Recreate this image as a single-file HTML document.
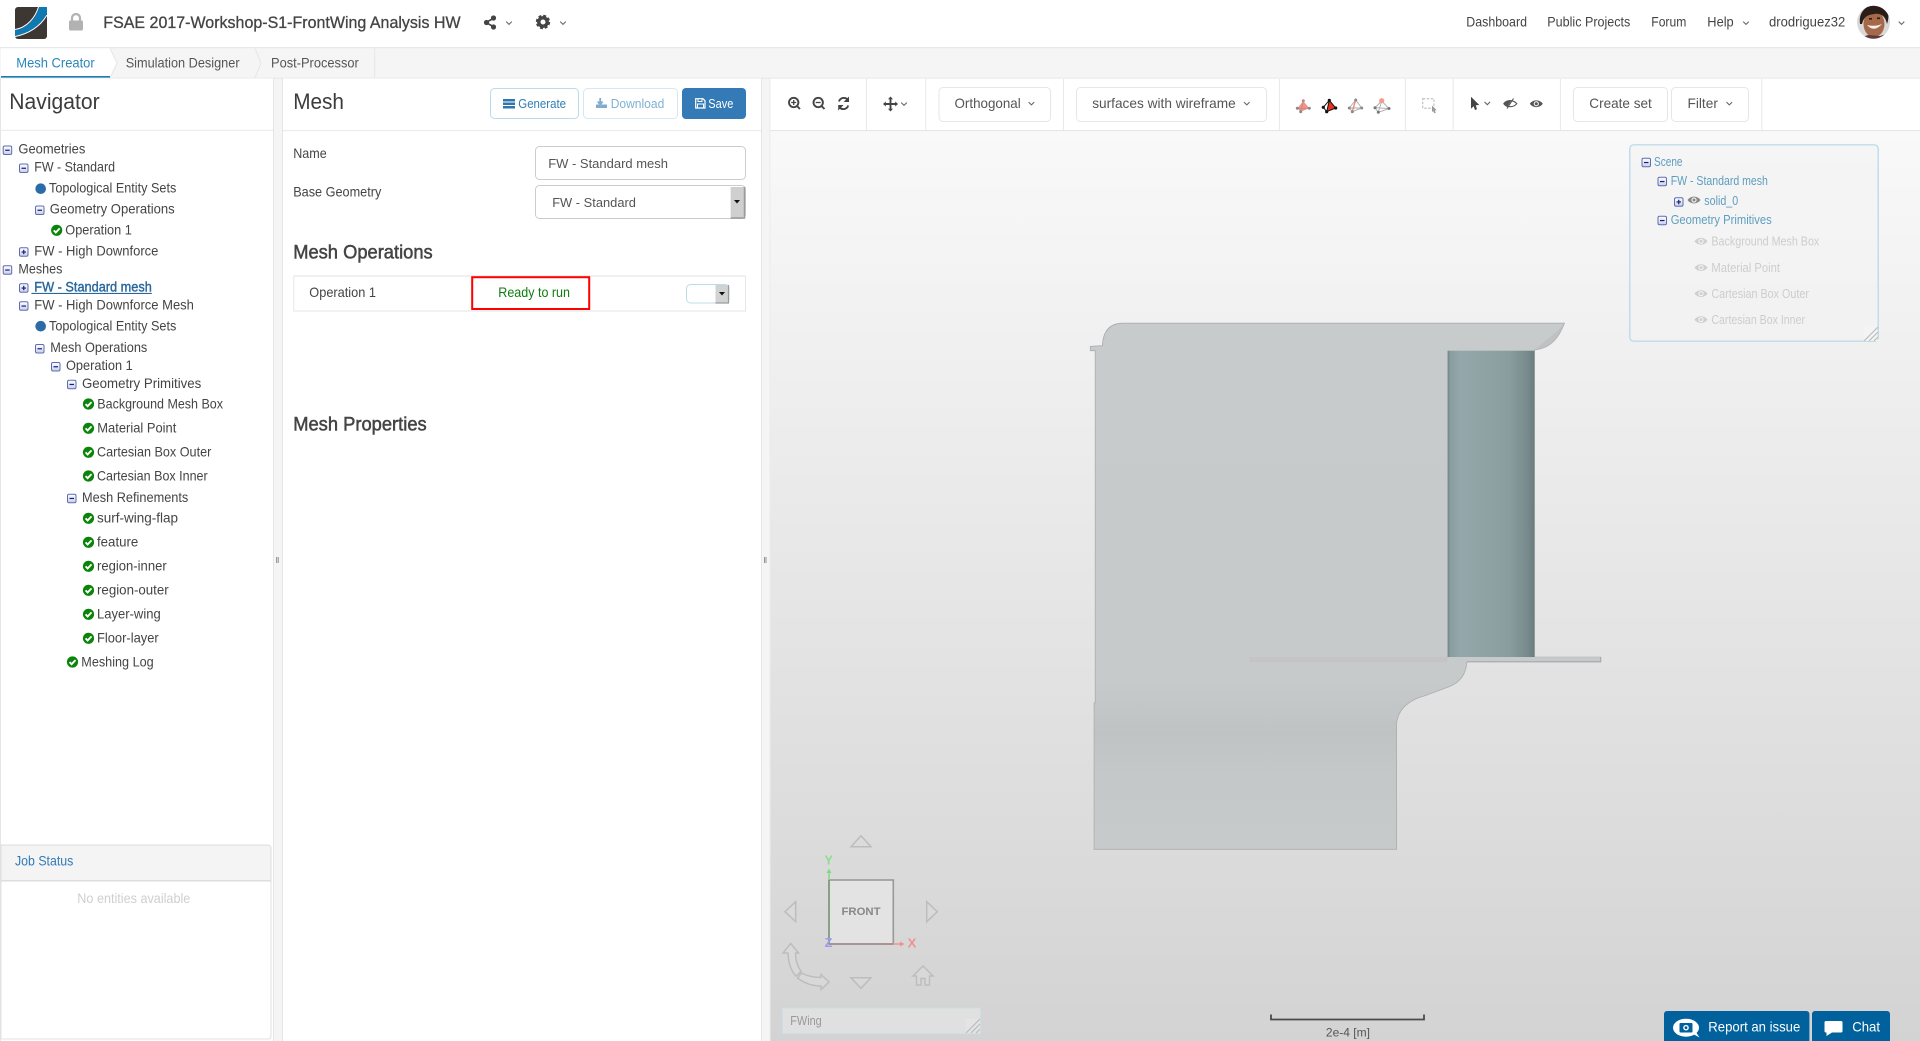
<!DOCTYPE html>
<html lang="en"><head><meta charset="utf-8"><title>Mesh Creator</title>
<style>
html,body{margin:0;padding:0;background:#fff;overflow:hidden}
svg{display:block}
text{font-family:"Liberation Sans",sans-serif;font-size:14px;fill:#444;white-space:pre}
.h{font-size:22px;fill:#3c3c3c}
.h2{font-size:19.5px;fill:#444;stroke:#444;stroke-width:.5}
.t13{font-size:13px}
.blue{fill:#337ab7}
.lb{fill:#5d9ebf;font-size:12.5px}
.gr{fill:#cdcdcd;font-size:12.5px}
.ch{fill:none;stroke:#666;stroke-width:1.1}
.ic{fill:none;stroke:#444;stroke-width:1.9}
.ar{fill:#dcdcdc;fill-opacity:.5;stroke:#bdbdbd;stroke-width:1.5}
</style></head><body>
<svg width="1920" height="1041" viewBox="0 0 1920 1041" xmlns="http://www.w3.org/2000/svg">
<defs>
<linearGradient id="bg" x1="0" y1="0" x2="0" y2="1"><stop offset="0" stop-color="#f9f9f9"/><stop offset="1" stop-color="#d3d3d3"/></linearGradient>
<linearGradient id="boxg" x1="0" y1="0" x2="0" y2="1"><stop offset="0" stop-color="#fff"/><stop offset="1" stop-color="#c9d0e4"/></linearGradient>
<linearGradient id="cyl" x1="0" y1="0" x2="1" y2="0"><stop offset="0" stop-color="#6f8285"/><stop offset=".03" stop-color="#8a9ea1"/><stop offset=".15" stop-color="#94a7aa"/><stop offset=".7" stop-color="#8a9d9f"/><stop offset=".92" stop-color="#778a8c"/><stop offset="1" stop-color="#6b7c7e"/></linearGradient>
<linearGradient id="wing" x1="0" y1="0" x2="0" y2="1"><stop offset="0" stop-color="#c7cbcb"/><stop offset=".68" stop-color="#c6caca"/><stop offset=".78" stop-color="#c0c3c4"/><stop offset=".86" stop-color="#c5c8c9"/><stop offset="1" stop-color="#c6caca"/></linearGradient>
<g id="mi"><rect x="-4" y="-4" width="8.5" height="8.5" rx="1.5" fill="url(#boxg)" stroke="#5c6cb4" stroke-width="1"/><path d="M-2 .25H2.5" stroke="#1a1a80" stroke-width="1.2"/></g>
<g id="pl"><rect x="-4" y="-4" width="8.5" height="8.5" rx="1.5" fill="url(#boxg)" stroke="#5c6cb4" stroke-width="1"/><path d="M-2 .25H2.5M.25 -2V2.5" stroke="#1a1a80" stroke-width="1.2"/></g>
<g id="ck"><circle r="5.6" fill="#0b840b"/><path d="M-2.9 .1L-.9 2.2L3 -1.9" fill="none" stroke="#fff" stroke-width="1.9"/></g>
<path id="cv" d="M-2.8 -1.4L0 1.4L2.8 -1.4" class="ch"/>
<g id="eye"><path d="M-6.5 0C-3.5 -4.5 3.5 -4.5 6.5 0C3.5 4.5 -3.5 4.5 -6.5 0Z" fill="currentColor"/><circle r="2.6" fill="#f4f4f4"/><circle r="1.5" fill="currentColor"/></g>
<path id="hatch" d="M0 14L14 0M5 14L14 5M10 14L14 10" stroke="#bbb" stroke-width="1.2" fill="none"/>
</defs>

<!-- base -->
<rect width="1920" height="1041" fill="#f5f5f5"/>
<rect width="1920" height="47" fill="#fff"/>
<rect y="47" width="1920" height="1.3" fill="#e8e8e8"/>

<!-- logo -->
<rect x="15" y="7" width="32" height="32" rx="3" fill="#3d3733"/>
<path d="M15 30C28 28 36 18 39 7L47 7L47 13C42 25 30 33 15 36Z" fill="#0f79b4"/>
<path d="M15 29.5C27 27.5 35 18 38.5 7" fill="none" stroke="#fff" stroke-width="1"/>
<path d="M15 36.5C28 34 40 27 47 15" fill="none" stroke="#fff" stroke-width="1"/>
<!-- lock -->
<path d="M72 21V18a4 4 0 0 1 8 0V21" fill="none" stroke="#b2b2b2" stroke-width="2.2"/>
<rect x="69" y="20.5" width="14" height="10" rx="1.5" fill="#b2b2b2"/>

<text x="103.3" y="28" textLength="357.3" lengthAdjust="spacingAndGlyphs" style="font-size:17px;fill:#444;stroke:#444;stroke-width:.3">FSAE 2017-Workshop-S1-FrontWing Analysis HW</text>
<!-- share -->
<path d="M494 18L486 22.5L494 27" fill="none" stroke="#444" stroke-width="1.6"/>
<circle cx="493.5" cy="18" r="2.6" fill="#444"/><circle cx="486.5" cy="22.5" r="2.6" fill="#444"/><circle cx="493.5" cy="27" r="2.6" fill="#444"/>
<use href="#cv" x="509" y="23"/>
<!-- gear -->
<circle cx="543" cy="22" r="4.2" fill="none" stroke="#444" stroke-width="3.4"/>
<circle cx="543" cy="22" r="6.2" fill="none" stroke="#444" stroke-width="2" stroke-dasharray="3 1.87"/>
<use href="#cv" x="563" y="23"/>

<text x="1466.3" y="26.7" textLength="60.7" lengthAdjust="spacingAndGlyphs">Dashboard</text>
<text x="1547.3" y="26.7" textLength="83" lengthAdjust="spacingAndGlyphs">Public Projects</text>
<text x="1651.3" y="26.7" textLength="35" lengthAdjust="spacingAndGlyphs">Forum</text>
<text x="1707.3" y="26.7" textLength="26.4" lengthAdjust="spacingAndGlyphs">Help</text>
<use href="#cv" x="1746" y="23"/>
<text x="1769" y="26.7" textLength="76.3" lengthAdjust="spacingAndGlyphs">drodriguez32</text>
<!-- avatar -->
<clipPath id="av"><circle cx="1873.5" cy="22.3" r="16.5"/></clipPath>
<g clip-path="url(#av)"><rect x="1857" y="5" width="33" height="35" fill="#d8d8d8"/>
<ellipse cx="1874" cy="24" rx="10.5" ry="13" fill="#a5694a"/>
<path d="M1860 24C1858 9 1870 4 1878 5C1889 6 1890 15 1887 24C1885 15 1880 13 1874 14C1868 15 1864 16 1862 24Z" fill="#2a1c16"/>
<path d="M1867 25Q1874 33 1882 24Q1875 27 1867 25Z" fill="#f3efe9"/>
<rect x="1869" y="18" width="3" height="1.6" fill="#2a1c16"/><rect x="1877" y="17.5" width="3" height="1.6" fill="#2a1c16"/>
<path d="M1857 39L1868 35L1880 36L1890 33V41H1857Z" fill="#5a3a40"/></g>
<use href="#cv" x="1901.5" y="23"/>

<!-- tabs -->
<rect x="0" y="48.3" width="375" height="29.7" fill="#f5f5f5"/>
<rect x="1" y="48.3" width="109" height="29.7" fill="#fff"/>
<path d="M110 48.3L117 63L110 78" fill="#fff" stroke="#e6e6e6"/>
<path d="M255 48.3L261 63L255 78" fill="#f5f5f5" stroke="#e6e6e6"/>
<path d="M374.7 48.3V78" stroke="#e6e6e6"/>
<rect x="1" y="76" width="109" height="2.2" fill="#1a7cb2"/>
<text x="16.3" y="67.3" textLength="78.4" lengthAdjust="spacingAndGlyphs" style="fill:#2a86ba">Mesh Creator</text>
<text x="125.7" y="67.3" textLength="113.9" lengthAdjust="spacingAndGlyphs" style="fill:#555">Simulation Designer</text>
<text x="271" y="67.3" textLength="87.8" lengthAdjust="spacingAndGlyphs" style="fill:#555">Post-Processor</text>
<rect y="77.6" width="1920" height="1.2" fill="#e8e8e8"/>

<!-- navigator panel -->
<rect x="1" y="78.5" width="272" height="962.5" fill="#fff"/>
<path d="M.5 78V1041M273.5 78V1041" stroke="#e5e5e5"/>
<text class="h" x="9.3" y="109" textLength="90.3" lengthAdjust="spacingAndGlyphs">Navigator</text>
<rect x="1" y="129.7" width="272" height="1.2" fill="#ececec"/>

<use href="#mi" x="7.2" y="150"/><text x="18.4" y="153.7" textLength="66.9" lengthAdjust="spacingAndGlyphs">Geometries</text>
<use href="#mi" x="23.5" y="168"/><text x="34.3" y="171.7" textLength="80.7" lengthAdjust="spacingAndGlyphs">FW - Standard</text>
<circle cx="40.7" cy="188.7" r="5.3" fill="#2b6ca8"/><text x="49" y="192.7" textLength="127.3" lengthAdjust="spacingAndGlyphs">Topological Entity Sets</text>
<use href="#mi" x="39.5" y="210"/><text x="49.8" y="213.7" textLength="124.9" lengthAdjust="spacingAndGlyphs">Geometry Operations</text>
<use href="#ck" x="56.7" y="230.3"/><text x="65.3" y="234.7" textLength="66.5" lengthAdjust="spacingAndGlyphs">Operation 1</text>
<use href="#pl" x="23.5" y="251.8"/><text x="34.3" y="255.7" textLength="124.1" lengthAdjust="spacingAndGlyphs">FW - High Downforce</text>
<use href="#mi" x="7.2" y="269.8"/><text x="18.4" y="273.7" textLength="44" lengthAdjust="spacingAndGlyphs">Meshes</text>
<use href="#pl" x="23.5" y="287.8"/><text x="34.3" y="291.7" textLength="117.5" lengthAdjust="spacingAndGlyphs" style="fill:#27679e;stroke:#27679e;stroke-width:.4">FW - Standard mesh</text>
<rect x="31.4" y="292.9" width="120.4" height="1.1" fill="#27679e"/>
<use href="#mi" x="23.5" y="305.8"/><text x="34.3" y="309.7" textLength="159.6" lengthAdjust="spacingAndGlyphs">FW - High Downforce Mesh</text>
<circle cx="40.7" cy="326.2" r="5.3" fill="#2b6ca8"/><text x="49" y="330.7" textLength="127.3" lengthAdjust="spacingAndGlyphs">Topological Entity Sets</text>
<use href="#mi" x="39.5" y="348.5"/><text x="50.3" y="352.2" textLength="97" lengthAdjust="spacingAndGlyphs">Mesh Operations</text>
<use href="#mi" x="55.5" y="366.5"/><text x="66" y="370.2" textLength="66.7" lengthAdjust="spacingAndGlyphs">Operation 1</text>
<use href="#mi" x="71.5" y="384.2"/><text x="82" y="387.9" textLength="119.3" lengthAdjust="spacingAndGlyphs">Geometry Primitives</text>
<use href="#ck" x="88.5" y="404"/><text x="97.3" y="408.7" textLength="125.7" lengthAdjust="spacingAndGlyphs">Background Mesh Box</text>
<use href="#ck" x="88.5" y="428.3"/><text x="97.3" y="432.7" textLength="79" lengthAdjust="spacingAndGlyphs">Material Point</text>
<use href="#ck" x="88.5" y="452.3"/><text x="97" y="456.7" textLength="114.3" lengthAdjust="spacingAndGlyphs">Cartesian Box Outer</text>
<use href="#ck" x="88.5" y="476"/><text x="97" y="480.7" textLength="110.7" lengthAdjust="spacingAndGlyphs">Cartesian Box Inner</text>
<use href="#mi" x="71.5" y="498.2"/><text x="82" y="501.9" textLength="106.3" lengthAdjust="spacingAndGlyphs">Mesh Refinements</text>
<use href="#ck" x="88.5" y="518.3"/><text x="97" y="522.7" textLength="81" lengthAdjust="spacingAndGlyphs">surf-wing-flap</text>
<use href="#ck" x="88.5" y="542.3"/><text x="97" y="546.7" textLength="41.3" lengthAdjust="spacingAndGlyphs">feature</text>
<use href="#ck" x="88.5" y="566.3"/><text x="97" y="570.7" textLength="69.7" lengthAdjust="spacingAndGlyphs">region-inner</text>
<use href="#ck" x="88.5" y="590.3"/><text x="97" y="594.7" textLength="71.7" lengthAdjust="spacingAndGlyphs">region-outer</text>
<use href="#ck" x="88.5" y="614.3"/><text x="97" y="618.7" textLength="63.7" lengthAdjust="spacingAndGlyphs">Layer-wing</text>
<use href="#ck" x="88.5" y="638.3"/><text x="97" y="642.7" textLength="61.7" lengthAdjust="spacingAndGlyphs">Floor-layer</text>
<use href="#ck" x="72.5" y="662"/><text x="81.3" y="666.7" textLength="72.4" lengthAdjust="spacingAndGlyphs">Meshing Log</text>

<!-- job status -->
<path d="M1 845H268a3 3 0 0 1 3 3V881H1Z" fill="#f4f4f4" stroke="#ddd"/>
<path d="M1 881H271V1036a3 3 0 0 1 -3 3H1Z" fill="#fff" stroke="#e0e0e0"/>
<rect x="1" y="880" width="270" height="1.4" fill="#ddd"/>
<text class="blue" x="15" y="865.7" textLength="58.3" lengthAdjust="spacingAndGlyphs">Job Status</text>
<text x="77.3" y="902.8" textLength="113" lengthAdjust="spacingAndGlyphs" style="fill:#cfcfcf">No entities available</text>
<path d="M276.7 557V563M278.2 557V563" stroke="#777" stroke-width=".8"/>

<!-- mesh panel -->
<rect x="282.5" y="78.5" width="479" height="962.5" fill="#fff"/>
<path d="M282.5 78V1041M761.5 78V1041" stroke="#e5e5e5"/>
<text class="h" x="293.2" y="109" textLength="50.8" lengthAdjust="spacingAndGlyphs">Mesh</text>
<rect x="283" y="130" width="478" height="1.2" fill="#ececec"/>

<rect x="490.5" y="88.5" width="88" height="30" rx="4" fill="#fff" stroke="#b9dbea"/>
<path d="M503 99H515V101.5H503ZM503 102.5H515V105H503ZM503 106H515V108.5H503Z" fill="#2f76ad"/>
<text x="518.3" y="108" textLength="47.7" lengthAdjust="spacingAndGlyphs" class="t13" style="fill:#2f7fb2">Generate</text>
<rect x="583.5" y="88.5" width="94" height="30" rx="4" fill="#fff" stroke="#d5e8f1"/>
<path d="M600.2 98V103M597.8 101.5L600.2 104.5L602.6 101.5" fill="none" stroke="#7fabcf" stroke-width="1.8"/><path d="M596 104.5H599L600.2 106L601.4 104.5H607V108H596Z" fill="#7fabcf"/>
<text x="610.7" y="108" textLength="53.6" lengthAdjust="spacingAndGlyphs" class="t13" style="fill:#7fb0d4">Download</text>
<rect x="682" y="88" width="64" height="31" rx="4" fill="#337ab7"/>
<path d="M695.7 98.7H703L705 100.7V108H695.7Z" fill="none" stroke="#fff" stroke-width="1.2"/><path d="M698 98.7V101.5H702V98.7M697.5 108V104H703.5V108" fill="none" stroke="#fff" stroke-width="1"/>
<text x="708.3" y="108" textLength="25" lengthAdjust="spacingAndGlyphs" class="t13" style="fill:#fff">Save</text>

<text x="293.2" y="158" textLength="33.5" lengthAdjust="spacingAndGlyphs">Name</text>
<text x="293.2" y="196.7" textLength="88.1" lengthAdjust="spacingAndGlyphs">Base Geometry</text>
<rect x="535.5" y="146.5" width="210" height="33" rx="4" fill="#fff" stroke="#ccc"/>
<text x="548.2" y="167.8" textLength="119.8" lengthAdjust="spacingAndGlyphs" style="font-size:13.33px;fill:#555">FW - Standard mesh</text>
<rect x="535.5" y="185.5" width="210" height="33" rx="4" fill="#fff" stroke="#ccc"/>
<text x="552.2" y="206.8" textLength="83.8" lengthAdjust="spacingAndGlyphs" style="font-size:13.33px;fill:#555">FW - Standard</text>
<rect x="730.3" y="187" width="14" height="31" fill="#cfcfcf"/>
<path d="M730.3 218H744.5V187" fill="none" stroke="#9a9a9a" stroke-width="1.5"/><path d="M730.5 187V218" stroke="#eee"/>
<path d="M734 200H740L737 203.5Z" fill="#111"/>

<text class="h2" x="293.2" y="258.7" textLength="139.5" lengthAdjust="spacingAndGlyphs">Mesh Operations</text>
<rect x="293.8" y="276" width="451.7" height="35" fill="#fff" stroke="#e6e6e6"/>
<rect x="293.5" y="275.2" width="452.3" height="1.6" fill="#ececec"/>
<text x="309.3" y="296.8" textLength="66.7" lengthAdjust="spacingAndGlyphs">Operation 1</text>
<rect x="472.2" y="277.2" width="117" height="31.8" fill="none" stroke="#f00" stroke-width="2"/>
<text x="498.3" y="296.8" textLength="71.7" lengthAdjust="spacingAndGlyphs" style="fill:#107c10">Ready to run</text>
<rect x="686.5" y="284.5" width="42.5" height="18.5" rx="4" fill="#fff" stroke="#bcdcea"/>
<rect x="715.5" y="285" width="13" height="18" fill="#d2d2d2"/>
<path d="M715.5 303H728.5V285" fill="none" stroke="#9a9a9a" stroke-width="1.2"/>
<path d="M719 292H725L722 295.5Z" fill="#111"/>
<text class="h2" x="293.2" y="430.7" textLength="133.5" lengthAdjust="spacingAndGlyphs">Mesh Properties</text>
<path d="M764.5 557V563M766 557V563" stroke="#777" stroke-width=".8"/>

<!-- viewer -->
<rect x="770" y="130.5" width="1150" height="910.5" fill="url(#bg)"/>
<rect x="770" y="78.7" width="1150" height="51.8" fill="#fff"/>
<rect x="770" y="130" width="1150" height="1.1" fill="#e6e6e6"/>
<rect x="769.5" y="78.7" width="1" height="962" fill="#ececec"/>
<path d="M866.5 79V130M925.8 79V130M1063.5 79V130M1279.4 79V130M1405.4 79V130M1453.2 79V130M1560.4 79V130M1761.8 79V130" stroke="#e8e8e8"/>

<!-- toolbar icons -->
<g class="ic"><circle cx="793.7" cy="102.5" r="4.7"/><path d="M797 106L800 109"/><path d="M791.2 102.5H796.2M793.7 100V105" stroke-width="1.3"/>
<circle cx="818.2" cy="102.5" r="4.7"/><path d="M821.5 106L824.5 109"/><path d="M815.7 102.5H820.7" stroke-width="1.3"/>
<path d="M839 101.5A5 5 0 0 1 848 100.2M848.2 105.5A5 5 0 0 1 839.2 106.8"/></g>
<path d="M849 96.5V102H843.6ZM838.2 110.5V105H843.6Z" fill="#444"/>
<path d="M890.5 98V110M884.5 104H896.5" stroke="#444" stroke-width="1.9"/>
<path d="M890.5 96.5L893 99.3H888ZM890.5 111.5L893 108.7H888ZM883 104L885.8 101.5V106.5ZM898 104L895.2 101.5V106.5Z" fill="#444"/>
<use href="#cv" x="904" y="104"/>

<rect x="939" y="87.5" width="111.5" height="34" rx="4" fill="#fff" stroke="#e6e6e6"/>
<text x="954.5" y="107.8" textLength="66.2" lengthAdjust="spacingAndGlyphs" style="fill:#555">Orthogonal</text>
<use href="#cv" x="1031.4" y="103.5"/>
<rect x="1076.5" y="87.5" width="190" height="34" rx="4" fill="#fff" stroke="#e6e6e6"/>
<text x="1092.2" y="107.8" textLength="143.5" lengthAdjust="spacingAndGlyphs" style="fill:#555">surfaces with wireframe</text>
<use href="#cv" x="1246.8" y="103.5"/>

<!-- tetra icons -->
<path d="M1303.3 101L1297.3 108.3L1300.7 111.7L1309.3 108.3Z" fill="#f0948a"/>
<path d="M1303.3 101L1300.7 111.7M1297.3 108.3L1309.3 108.3" stroke="#c9857c" stroke-width=".8" fill="none"/>
<g fill="#8a8a8a"><circle cx="1303.3" cy="100.8" r="1.5" fill="#b88"/><circle cx="1297.3" cy="108.3" r="1.5"/><circle cx="1309.3" cy="108.3" r="1.5"/><circle cx="1300.7" cy="111.7" r="1.5"/></g>

<path d="M1329.3 100.3L1335.7 108L1326.7 111.7Z" fill="#e8331c"/>
<path d="M1329.3 100.3L1323.3 107.3L1326.7 111.7L1335.7 108ZM1329.3 100.3L1326.7 111.7" fill="none" stroke="#111" stroke-width="1"/>
<g fill="#111"><circle cx="1329.3" cy="100.3" r="1.6"/><circle cx="1323.3" cy="107.3" r="1.6"/><circle cx="1335.7" cy="108" r="1.6"/><circle cx="1326.7" cy="111.7" r="1.6"/></g>

<path d="M1355.7 100L1349.3 108L1352.3 111.7L1361.7 108ZM1349.3 108H1361.7" fill="none" stroke="#aaa" stroke-width=".9"/>
<path d="M1355.7 100L1352.3 111.7" stroke="#ef8a7e" stroke-width="1.4"/>
<g fill="#8a8a8a"><circle cx="1355.7" cy="100" r="1.5"/><circle cx="1349.3" cy="108" r="1.5"/><circle cx="1361.7" cy="108" r="1.5"/><circle cx="1352.3" cy="111.7" r="1.5"/></g>

<path d="M1381.7 101L1375 107.7L1378.3 112.3L1389 108.5ZM1381.7 101L1378.3 112.3M1375 107.7L1389 108.5" fill="none" stroke="#aaa" stroke-width=".9"/>
<circle cx="1381.7" cy="100.7" r="2.6" fill="#f79a90"/>
<g fill="#777"><circle cx="1375" cy="107.7" r="1.5"/><circle cx="1389" cy="108.5" r="1.5"/><circle cx="1378.3" cy="112.3" r="1.5"/></g>

<rect x="1422.7" y="98.7" width="11.2" height="9.6" fill="none" stroke="#c8c8c8" stroke-width="1.3" stroke-dasharray="2.5 1.5"/>
<path d="M1432 105.5L1436.7 110.3L1434.8 110.4L1435.8 112.8L1434.2 113.3L1433.2 111L1432 112Z" fill="#999"/>
<path d="M1471 96.7L1479.3 105L1475.8 105.3L1477 109.3L1475 110L1473.6 106.2L1471 108.8Z" fill="#444"/>
<use href="#cv" x="1487.3" y="103.3"/>
<g style="color:#555">
<path d="M1503.8 103.7C1506.5 99.7 1513.5 99.7 1516.8 103.7C1513.5 107.7 1506.5 107.7 1503.8 103.7Z" fill="none" stroke="#555" stroke-width="1.1"/>
<path d="M1503.8 103.7C1505.5 101 1508.5 99.8 1511.5 100.2L1507.5 107C1506 106.5 1505 105.4 1503.8 103.7Z" fill="#555"/>
<path d="M1507 108.5L1513.5 98.5" stroke="#555" stroke-width="1.1"/>
<use href="#eye" x="1536.3" y="103.7"/></g>

<rect x="1573.5" y="87.5" width="94" height="34" rx="4" fill="#fff" stroke="#e6e6e6"/>
<text x="1589.3" y="107.8" textLength="62.5" lengthAdjust="spacingAndGlyphs" style="fill:#555">Create set</text>
<rect x="1671.5" y="87.5" width="77" height="34" rx="4" fill="#fff" stroke="#e6e6e6"/>
<text x="1687.5" y="107.8" textLength="30.4" lengthAdjust="spacingAndGlyphs" style="fill:#555">Filter</text>
<use href="#cv" x="1729.3" y="103.5"/>

<!-- scene tree -->
<rect x="1629.8" y="144.8" width="248.4" height="196.4" rx="4" fill="#f3f3f3" fill-opacity=".55" stroke="#b4d8e7" stroke-width="1.2"/>
<use href="#mi" x="1646" y="162.3"/><text class="lb" x="1654" y="166" textLength="28.5" lengthAdjust="spacingAndGlyphs">Scene</text>
<use href="#mi" x="1662" y="181.3"/><text class="lb" x="1670.7" y="185" textLength="97.2" lengthAdjust="spacingAndGlyphs">FW - Standard mesh</text>
<use href="#pl" x="1678.5" y="201.7"/><g style="color:#888"><use href="#eye" x="1694" y="200"/></g><text class="lb" x="1704.3" y="205" textLength="33.9" lengthAdjust="spacingAndGlyphs">solid_0</text>
<use href="#mi" x="1662" y="220.3"/><text class="lb" x="1670.7" y="224" textLength="101.1" lengthAdjust="spacingAndGlyphs">Geometry Primitives</text>
<g style="color:#cfcfcf"><use href="#eye" x="1701" y="241.3"/><use href="#eye" x="1701" y="267.6"/><use href="#eye" x="1701" y="293.6"/><use href="#eye" x="1701" y="319.6"/></g>
<text class="gr" x="1711.4" y="245.7" textLength="107.9" lengthAdjust="spacingAndGlyphs">Background Mesh Box</text>
<text class="gr" x="1711.4" y="272.2" textLength="68.6" lengthAdjust="spacingAndGlyphs">Material Point</text>
<text class="gr" x="1711.4" y="298.2" textLength="97.6" lengthAdjust="spacingAndGlyphs">Cartesian Box Outer</text>
<text class="gr" x="1711.4" y="324.2" textLength="93.6" lengthAdjust="spacingAndGlyphs">Cartesian Box Inner</text>
<rect x="1863.6" y="326" width="14" height="15" fill="#f4f4f4"/>
<use href="#hatch" x="1864" y="327"/>

<!-- 3D model -->
<path d="M1102.4 345.7L1090.3 346.4V350.7H1095.2V702.9H1094.1V849.3H1396.6V724.3C1397 713 1405 701 1424.8 695.7L1449 686.8C1460 682 1466 675 1466.9 661.8H1600.7V657.1H1534.5V350C1552 348 1559 337 1564.5 323.2H1123.1C1109 323.2 1103 332 1102.4 345.7Z" fill="url(#wing)" stroke="#a9adad" stroke-width=".8"/>
<path d="M1534.5 350C1552 348 1559 337 1564.5 323.2C1560 328 1557 332 1545 341Z" fill="#b9bcbd" opacity=".6"/>
<rect x="1447.6" y="350.7" width="86.9" height="306.4" fill="url(#cyl)"/>
<rect x="1249.3" y="657.1" width="351.4" height="4.7" fill="#c7caca"/>
<path d="M1466.9 661.8H1600.7V657.1" fill="none" stroke="#a4a7a7" stroke-width="1"/>
<rect x="1249.3" y="657.1" width="198" height="4.7" fill="#c3c2c4" opacity=".8"/>

<!-- view cube -->
<path class="ar" d="M851 846.7L861 835.7L871 846.7Z"/>
<path class="ar" d="M795.7 901.7L785 911.7L795.7 921.7Z"/>
<path class="ar" d="M926.7 901.7L937.3 911.7L926.7 921.7Z"/>
<path class="ar" d="M851 977.7H871L861 988.3Z"/>
<rect x="829" y="880" width="64.3" height="64" fill="#e3e3e3" stroke="#999" stroke-width="1.6"/>
<path d="M829 880V944" stroke="#7c9c7c" stroke-width="1.6"/><path d="M829 944H893" stroke="#a88888" stroke-width="1.6"/>
<text x="861" y="915" text-anchor="middle" textLength="39" lengthAdjust="spacingAndGlyphs" style="font-size:11px;font-weight:bold;fill:#888">FRONT</text>
<path d="M829 880V871" stroke="#82d882" stroke-width="1.4"/><path d="M829 868.5L831.5 873H826.5Z" fill="#82d882"/>
<text x="828.7" y="864.7" text-anchor="middle" style="font-size:12.5px;font-weight:bold;fill:#8edc8e">Y</text>
<path d="M893 944H902" stroke="#f09090" stroke-width="1.4"/><path d="M904.5 944L900 941.5V946.5Z" fill="#f09090"/>
<text x="912" y="947.7" text-anchor="middle" style="font-size:13px;font-weight:bold;fill:#f09090">X</text>
<text x="828.5" y="947" text-anchor="middle" style="font-size:12.5px;font-weight:bold;fill:#9c9cf0">Z</text>
<path class="ar" d="M790.7 943.5L783 953H788C788.5 963 791 971 796 976L801 971.5C797.5 966.5 795.5 960 795.5 953H798.5Z"/>
<path class="ar" d="M797.5 978L801.5 973C807 976 814 977.5 821 977.5V974.5L829 982L821 989.5V986C812 986 804 983 797.5 978Z"/>
<path class="ar" d="M923 966L913 976H916.5V985H921V978.5H925V985H929.5V976H933Z"/>

<!-- FWing -->
<rect x="782.5" y="1008" width="198" height="25.7" fill="#e0e0e0" stroke="#c9dfe5" stroke-width="1"/>
<text x="790.3" y="1025" textLength="31.4" lengthAdjust="spacingAndGlyphs" style="fill:#999;font-size:13px">FWing</text>
<rect x="965.5" y="1018.7" width="14.5" height="14.5" fill="#e4e4e4"/>
<use href="#hatch" x="966" y="1019"/>

<!-- scale bar -->
<path d="M1271 1014.5V1019.5H1424V1014.5" fill="none" stroke="#4a4a4a" stroke-width="1.8"/>
<text x="1325.9" y="1036.7" textLength="44.1" lengthAdjust="spacingAndGlyphs" style="font-size:12px;fill:#555">2e-4 [m]</text>

<!-- buttons -->
<path d="M1664 1041V1014a3 3 0 0 1 3 -3H1806.4a3 3 0 0 1 3 3V1041Z" fill="#00619c"/>
<path d="M1812 1041V1014a3 3 0 0 1 3 -3H1887a3 3 0 0 1 3 3V1041Z" fill="#00619c"/>
<ellipse cx="1686" cy="1027.7" rx="13" ry="9" fill="#fff"/><path d="M1693 1034L1699.5 1037.5L1696 1032Z" fill="#fff"/>
<rect x="1679.5" y="1023" width="13" height="9.5" rx="1" fill="#00619c"/><circle cx="1686" cy="1027.7" r="2.8" fill="#fff"/><circle cx="1686" cy="1027.7" r="1.4" fill="#00619c"/>
<text x="1708.3" y="1031.7" textLength="92" lengthAdjust="spacingAndGlyphs" style="fill:#fff">Report an issue</text>
<path d="M1826 1021H1841a1.5 1.5 0 0 1 1.5 1.5V1031a1.5 1.5 0 0 1 -1.5 1.5H1832L1826.5 1036V1032.5H1826a1.5 1.5 0 0 1 -1.5 -1.5V1022.5A1.5 1.5 0 0 1 1826 1021Z" fill="#fff"/>
<text x="1852.3" y="1031.7" textLength="27.7" lengthAdjust="spacingAndGlyphs" style="fill:#fff">Chat</text>
</svg>
</body></html>
